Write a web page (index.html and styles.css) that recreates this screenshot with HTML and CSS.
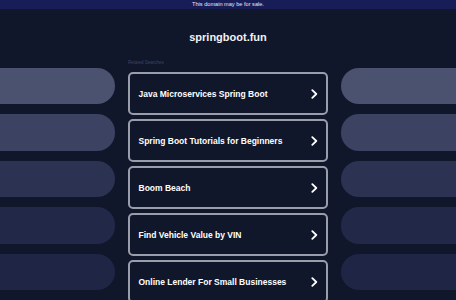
FILE: index.html
```html
<!DOCTYPE html>
<html lang="en">
<head>
    <meta charset="UTF-8">
    <meta name="viewport" content="width=device-width, initial-scale=1.0">
    <title>springboot.fun</title>
    <link rel="stylesheet" href="styles.css">
</head>
<body>
    <div class="topbar">This domain may be for sale.</div>

    <h1 class="domain">springboot.fun</h1>

    <div class="layout">
        <div class="side side-left">
            <div class="pill pill-1"></div>
            <div class="pill pill-2"></div>
            <div class="pill pill-3"></div>
            <div class="pill pill-4"></div>
            <div class="pill pill-5"></div>
        </div>

        <div class="searches">
            <div class="label">Related Searches</div>
            <a class="card" href="#">
                <span>Java Microservices Spring Boot</span>
                <svg class="chevron" viewBox="0 0 7 10"><polyline points="1.3,1.2 5.3,5 1.3,8.8"/></svg>
            </a>
            <a class="card" href="#">
                <span>Spring Boot Tutorials for Beginners</span>
                <svg class="chevron" viewBox="0 0 7 10"><polyline points="1.3,1.2 5.3,5 1.3,8.8"/></svg>
            </a>
            <a class="card" href="#">
                <span>Boom Beach</span>
                <svg class="chevron" viewBox="0 0 7 10"><polyline points="1.3,1.2 5.3,5 1.3,8.8"/></svg>
            </a>
            <a class="card" href="#">
                <span>Find Vehicle Value by VIN</span>
                <svg class="chevron" viewBox="0 0 7 10"><polyline points="1.3,1.2 5.3,5 1.3,8.8"/></svg>
            </a>
            <a class="card" href="#">
                <span>Online Lender For Small Businesses</span>
                <svg class="chevron" viewBox="0 0 7 10"><polyline points="1.3,1.2 5.3,5 1.3,8.8"/></svg>
            </a>
        </div>

        <div class="side side-right">
            <div class="pill pill-1"></div>
            <div class="pill pill-2"></div>
            <div class="pill pill-3"></div>
            <div class="pill pill-4"></div>
            <div class="pill pill-5"></div>
        </div>
    </div>
</body>
</html>
```

FILE: styles.css
```css
body {
    margin: 0;
    background-color: #11172b;
    font-family: "Liberation Sans", Arial, sans-serif;
    color: #fff;
    overflow: hidden;
}
.topbar {
    height: 9px;
    line-height: 9px;
    background-color: #191d57;
    color: #e6e8f2;
    font-size: 5.6px;
    text-align: center;
}
.domain {
    margin: 21px 0 14px;
    font-size: 11px;
    line-height: 14px;
    font-weight: bold;
    text-align: center;
    color: #f2f2f4;
}
.layout {
    display: grid;
    grid-template-columns: 1fr 200px 1fr;
    column-gap: 13px;
}
.side {
    display: flex;
    flex-direction: column;
    gap: 10px;
    padding-top: 9.5px;
}
.pill {
    height: 36.5px;
}
.side-left .pill {
    border-radius: 0 18px 18px 0;
}
.side-right .pill {
    border-radius: 18px 0 0 18px;
}
.pill-1 { background-color: #4b5270; }
.pill-2 { background-color: #3b4262; }
.pill-3 { background-color: #2c3352; }
.pill-4 { background-color: #222948; }
.pill-5 { background-color: #1e2545; }
.searches {
    display: flex;
    flex-direction: column;
    gap: 4px;
}
.label {
    height: 10px;
    line-height: 9px;
    font-size: 4.5px;
    color: #3d4460;
}
.card {
    box-sizing: border-box;
    height: 43px;
    display: flex;
    align-items: center;
    justify-content: space-between;
    padding: 0 8.5px;
    border: 2px solid #9a9eab;
    border-radius: 5px;
    color: #fff;
    text-decoration: none;
    font-size: 8.5px;
    font-weight: bold;
}
.chevron {
    width: 7px;
    height: 10px;
}
.chevron polyline {
    fill: none;
    stroke: #fff;
    stroke-width: 1.8;
    stroke-linecap: round;
    stroke-linejoin: round;
}
```
